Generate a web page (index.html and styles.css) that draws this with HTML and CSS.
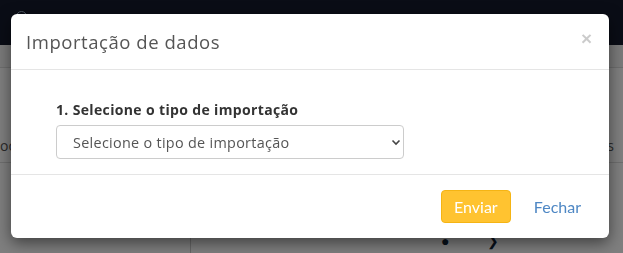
FILE: index.html
```html
<!DOCTYPE html>
<html lang="pt-BR">
<head>
<meta charset="utf-8">
<title>Importação de dados</title>
<link rel="stylesheet" href="styles.css">
</head>
<body>
<div class="page">
  <header class="nav">
    <span class="nav-avatar"></span>
  </header>
  <div class="subbar"></div>
  <div class="thead">
    <span class="th th-left">oc</span>
    <span class="th th-right">Ações</span>
  </div>
  <div class="trow"></div>
  <div class="lower">
    <aside class="side"></aside>
    <main class="main">
      <span class="glyph">●</span>
      <span class="glyph">❯</span>
    </main>
  </div>
</div>

<div class="backdrop"></div>

<div class="modal" role="dialog">
  <div class="modal-header">
    <h4 class="modal-title">Importação de dados</h4>
    <button class="close" type="button">×</button>
  </div>
  <div class="modal-body">
    <div class="form-group">
      <label class="label" for="tipo">1. Selecione o tipo de importação</label>
      <div class="select-wrap">
        <select id="tipo" class="select">
          <option>Selecione o tipo de importação</option>
        </select>
        <svg class="chevron" width="10" height="7" viewBox="0 0 10 7"><path d="M1.5 1.5 L5 5 L8.5 1.5" fill="none" stroke="#444" stroke-width="1.6"/></svg>
      </div>
    </div>
  </div>
  <div class="modal-footer">
    <button class="btn btn-warning" type="button">Enviar</button>
    <button class="btn btn-link" type="button">Fechar</button>
  </div>
</div>
</body>
</html>
```

FILE: styles.css
```css
* { box-sizing: border-box; }
html, body { margin: 0; padding: 0; }
body {
  width: 623px;
  height: 253px;
  overflow: hidden;
  font-family: "Open Sans", "Noto Sans", sans-serif;
  background: #fff;
}

/* underlying page */
.page { display: flex; flex-direction: column; height: 253px; }
.nav {
  height: 45px;
  background: #141a2c;
  padding: 7px 0 0 16px;
}
.nav-avatar {
  display: block;
  width: 11px;
  height: 11px;
  border: 1.5px solid #9fb3c8;
  border-radius: 50%;
  margin-top: 4px;
}
.subbar {
  height: 23px;
  background: #f5f5f5;
  border-bottom: 1px solid #dcdcdc;
}
.thead {
  height: 95px;
  display: flex;
  justify-content: space-between;
  align-items: flex-end;
  padding: 0 9px 7px 0;
  border-bottom: 1px solid #dcdcdc;
  font-size: 14px;
  color: #555;
}
.th-left { margin-left: 0; }
.trow { height: 75px; }
.lower { flex: 1; display: flex; }
.side { width: 191px; border-right: 1px solid #cfcfcf; }
.main {
  flex: 1;
  display: flex;
  gap: 38px;
  padding: 0 0 0 250px;
  color: #0f2236;
  font-size: 14px;
  line-height: 14px;
  margin-top: -4px;
}

.backdrop {
  position: fixed;
  inset: 0;
  background: rgba(0, 0, 0, 0.5);
}

/* modal */
.modal {
  position: absolute;
  left: 11px;
  top: 14px;
  width: 598px;
  background: #fff;
  border-radius: 6px;
  box-shadow: 0 5px 15px rgba(0, 0, 0, 0.5);
  font-family: "Open Sans", "Noto Sans", sans-serif;
}
.modal-header {
  display: flex;
  justify-content: space-between;
  align-items: center;
  padding: 15px;
  border-bottom: 1px solid #e5e5e5;
}
.modal-title {
  margin: 0;
  font-size: 18.5px;
  line-height: 25px;
  font-weight: 400;
  color: #555;
  letter-spacing: 0.55px;
}
.close {
  border: 0;
  background: none;
  padding: 0;
  margin: -7px 2px 0 0;
  font-size: 19px;
  line-height: 19px;
  font-weight: 700;
  color: #000;
  opacity: 0.2;
  font-family: "Liberation Sans", sans-serif;
}
.modal-body { padding: 15px; }
.form-group { padding: 15px 0 0 30px; }
.label {
  display: block;
  font-size: 14px;
  line-height: 20px;
  font-weight: 700;
  color: #333;
  margin-bottom: 5px;
  letter-spacing: 0.35px;
}
.select-wrap {
  position: relative;
  width: 348px;
}
.select {
  display: block;
  width: 100%;
  height: 34px;
  -webkit-appearance: none;
  appearance: none;
  border: 1px solid #ccc;
  border-radius: 4px;
  background: #fff;
  padding: 0 30px 0 16px;
  font-family: "Open Sans", "Noto Sans", sans-serif;
  font-size: 14.4px;
  letter-spacing: 0.3px;
  color: #555;
}
.chevron {
  position: absolute;
  right: 3px;
  top: 14px;
  pointer-events: none;
}
.modal-footer {
  display: flex;
  justify-content: flex-end;
  gap: 10px;
  padding: 15px;
  border-top: 1px solid #e5e5e5;
}
.btn {
  height: 33px;
  padding: 0 12px;
  font-family: "Lato", sans-serif;
  font-size: 16px;
  border-radius: 4px;
  border: 1px solid transparent;
  cursor: pointer;
}
.btn-warning {
  width: 70px;
  background: #ffc330;
  border-color: #f5b414;
  color: #fff;
}
.btn-link {
  background: none;
  color: #4e87c4;
}
```
